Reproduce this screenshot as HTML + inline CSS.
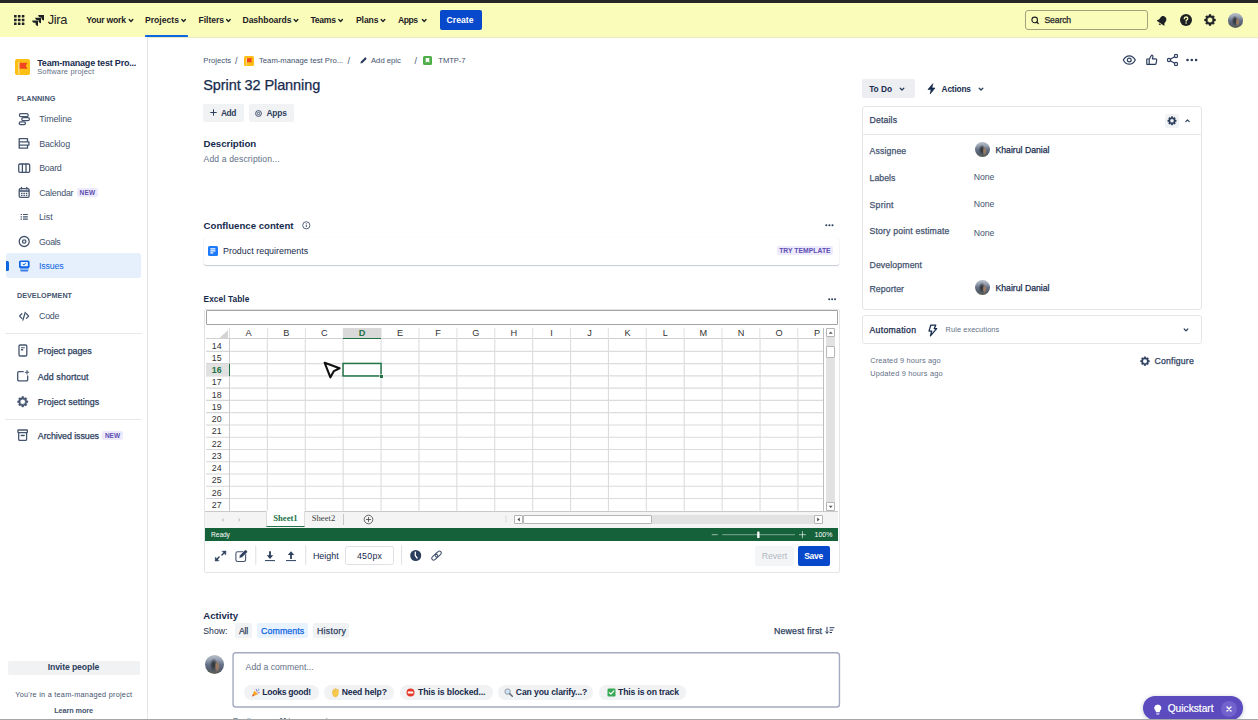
<!DOCTYPE html>
<html lang="en">
<head>
<meta charset="utf-8">
<title>Sprint 32 Planning - Jira</title>
<style>
*{box-sizing:border-box;margin:0;padding:0}
html,body{width:1258px;height:720px;overflow:hidden;background:#fff}
body{font-family:"Liberation Sans",sans-serif;color:#172b4d;font-size:8.5px;position:relative;-webkit-font-smoothing:antialiased}
.a{position:absolute;white-space:nowrap}
.b{font-weight:bold}
svg{position:absolute;overflow:visible}
/* top */
#topbar{left:0;top:0;width:1258px;height:3.200px;background:#262626}
#nav{left:0;top:2px;width:1258px;height:35.500px;background:#fafcb9;border-bottom:.6px solid #e9ebc4}
.nv{top:15px;font-size:8.6px;font-weight:bold;color:#1d2125;line-height:11px}
/* sidebar */
#side{left:0;top:37px;width:148px;height:683px;background:#fff;border-right:1px solid #e3e5ea}
.sl{font-size:8.9px;color:#42526e;line-height:11px;left:39px;margin-top:.5px}
.sh{font-size:7px;font-weight:bold;color:#44546f;left:17px;letter-spacing:.1px}
.lz{font-size:6px;font-weight:bold;color:#5e4db2;background:#eeeafc;border-radius:2px;padding:1px 2px;line-height:7px}
.btn{background:#f1f2f4;border-radius:2px}
.lbl{font-size:8.6px;color:#44546f;font-weight:bold;left:870px}
.val{font-size:8.6px;color:#172b4d;left:974px}

.bc{font-size:7.700px;line-height:10px;color:#44546f;top:55.900px}
.m{-webkit-text-stroke:.25px currentColor}
.t88{font-size:8.800px;line-height:11px}
.chip{top:685.300px;height:14.400px;background:#f1f2f4;border-radius:7.200px}
.cht{top:687.200px;font-size:8.600px;line-height:11px;font-weight:bold;color:#172b4d}
.sm{font-size:7.400px;line-height:10px;color:#626f86}

.ch{top:328.2px;width:37.900px;text-align:center;font-size:9.200px;line-height:10px;color:#333;font-family:"Liberation Sans",sans-serif}
.rh{left:206px;width:23px;text-align:center;font-size:8.800px;line-height:10px;color:#333;padding-right:1.500px}
.sb{background:#fff;border:1px solid #b5b5b5;border-radius:1px}

.lbl2{font-size:8.700px;line-height:11px;color:#44546f;left:869.500px;-webkit-text-stroke:.25px currentColor}
.val2{font-size:8.700px;line-height:11px;color:#172b4d;left:973.700px}
</style>
</head>
<body>
<div class="a" id="nav"></div>
<div class="a" id="topbar"></div>
<div class="a" id="side"></div>

<!-- NAV -->
<svg style="left:13.5px;top:15.3px" width="10.4" height="10" viewBox="0 0 10.4 10"><g fill="#1d2125"><rect x="0" y="0" width="2.6" height="2.5" rx=".5"/><rect x="3.9" y="0" width="2.6" height="2.5" rx=".5"/><rect x="7.8" y="0" width="2.6" height="2.5" rx=".5"/><rect x="0" y="3.75" width="2.6" height="2.5" rx=".5"/><rect x="3.9" y="3.75" width="2.6" height="2.5" rx=".5"/><rect x="7.8" y="3.75" width="2.6" height="2.5" rx=".5"/><rect x="0" y="7.5" width="2.6" height="2.5" rx=".5"/><rect x="3.9" y="7.5" width="2.6" height="2.5" rx=".5"/><rect x="7.8" y="7.5" width="2.6" height="2.5" rx=".5"/></g></svg>
<svg style="left:31.8px;top:15px" width="12" height="11" viewBox="0 0 12 11"><g fill="#1d2125"><path d="M6.2 0H12v5.6c-1.4 0-2.5-1.1-2.5-2.5V2.4H8.7C7.3 2.400 6.200 1.300 6.200 0z"/><path d="M3.2 2.700H9v5.600c-1.400 0-2.500-1.100-2.500-2.500V5.100H5.700C4.300 5.100 3.200 4 3.200 2.700z"/><path d="M.2 5.400H6V11c-1.400 0-2.500-1.100-2.500-2.500V7.800H2.700C1.300 7.800.2 6.700.2 5.400z"/></g></svg>
<div class="a" style="left:47.7px;top:11.96px;font-size:12.8px;line-height:16px;color:#1d2125;letter-spacing:-0.308px">Jira</div>
<div class="a nv" style="left:86.3px;letter-spacing:-0.211px">Your work</div>
<div class="a nv" style="left:145px;letter-spacing:0.011px">Projects</div>
<div class="a nv" style="left:198.5px;letter-spacing:-0.049px">Filters</div>
<div class="a nv" style="left:242.5px;letter-spacing:-0.075px">Dashboards</div>
<div class="a nv" style="left:310.5px;letter-spacing:-0.273px">Teams</div>
<div class="a nv" style="left:356px;letter-spacing:-0.109px">Plans</div>
<div class="a nv" style="left:398px;letter-spacing:-0.495px">Apps</div>
<svg style="left:0;top:0" width="1258" height="40" viewBox="0 0 1258 40"><g fill="none" stroke="#1d2125" stroke-width="1.4" stroke-linecap="round" stroke-linejoin="round"><path d="M129.200 19.600l1.800 1.800 1.800-1.800"/><path d="M181.800 19.600l1.800 1.800 1.800-1.800"/><path d="M226.600 19.600l1.800 1.800 1.800-1.800"/><path d="M294.200 19.600l1.800 1.800 1.800-1.800"/><path d="M338.800 19.600l1.800 1.800 1.800-1.800"/><path d="M381.200 19.600l1.800 1.800 1.800-1.800"/><path d="M422.400 19.600l1.800 1.800 1.800-1.800"/></g></svg>
<div class="a" style="left:145px;top:35px;width:42.500px;height:2px;background:#0c66e4;border-radius:1px 1px 0 0"></div>
<div class="a" style="left:439.500px;top:10px;width:42px;height:19.500px;background:#0848cb;border-radius:2px"></div>
<div class="a nv" style="left:446.5px;color:#fff;letter-spacing:0.047px">Create</div>
<div class="a" style="left:1025.300px;top:10px;width:122.500px;height:19.800px;border:1px solid #a0a27e;border-radius:3px;background:#fafcb9"></div>
<svg style="left:1030.500px;top:15.800px" width="9" height="9" viewBox="0 0 9 9"><circle cx="3.700" cy="3.900" r="2.800" fill="none" stroke="#1d2125" stroke-width="1.100"/><path d="M5.800 6l1.500 1.500" stroke="#1d2125" stroke-width="1.200" stroke-linecap="round"/></svg>
<div class="a m" style="left:1044.5px;top:14.500px;font-size:8.600px;line-height:11px;color:#1d2125;letter-spacing:-0.127px">Search</div>
<svg style="left:1155.500px;top:14.500px" width="12" height="12" viewBox="0 0 12 12"><g transform="rotate(35 6 6)" fill="#1d2125"><path d="M6 .8c-2 0-3.300 1.500-3.300 3.400v2.300L1.500 8.100v.7h9v-.7L9.300 6.500V4.200C9.300 2.300 8 .8 6 .8z"/><path d="M4.800 9.500a1.200 1.200 0 0 0 2.400 0z"/></g></svg>
<svg style="left:1179.500px;top:14px" width="12" height="12" viewBox="0 0 12 12"><circle cx="6" cy="6" r="6" fill="#1d2125"/><path d="M4.300 4.700c0-1 .8-1.700 1.800-1.700s1.700.7 1.700 1.500c0 1.300-1.700 1.400-1.700 2.600" fill="none" stroke="#fafcb9" stroke-width="1.300" stroke-linecap="round"/><circle cx="6.100" cy="9" r=".8" fill="#fafcb9"/></svg>
<svg style="left:1203.800px;top:14.200px" width="12" height="12" viewBox="0 0 12 12"><path fill="#1d2125" fill-rule="evenodd" stroke="#1d2125" stroke-width=".5" stroke-linejoin="round" d="M4.95 1.83L5.10 0.57L6.90 0.57L7.05 1.83L8.20 2.31L9.20 1.53L10.47 2.80L9.69 3.80L10.17 4.95L11.43 5.10L11.43 6.90L10.17 7.05L9.69 8.20L10.47 9.20L9.20 10.47L8.20 9.69L7.05 10.17L6.90 11.43L5.10 11.43L4.95 10.17L3.80 9.69L2.80 10.47L1.53 9.20L2.31 8.20L1.83 7.05L0.57 6.90L0.57 5.10L1.83 4.95L2.31 3.80L1.53 2.80L2.80 1.53L3.80 2.31zM3.30 6.00a2.7 2.7 0 1 0 5.4 0a2.7 2.7 0 1 0 -5.4 0z"/></svg>
<div class="a" style="left:1228.300px;top:13.100px;width:14.600px;height:14.600px;border-radius:50%;background:radial-gradient(ellipse 14% 30% at 64% 60%,#9a7a62 0 45%,transparent 100%),radial-gradient(ellipse 22% 36% at 46% 52%,#353a40 0 30%,transparent 100%),linear-gradient(180deg,#b9c0ca 0%,#98a2b2 25%,#667287 50%,#565f71 75%,#5a5e4c 100%)"></div>


<!-- SIDEBAR -->
<div class="a" style="left:15px;top:59px;width:15px;height:15.500px;background:#fdbf14;border-radius:2px"></div>
<svg style="left:15px;top:59px" width="15" height="15.500" viewBox="0 0 15 15.500"><path d="M4.300 3.800h8.200l-1.800 3 1.800 3H4.300z" fill="#f0451f"/><rect x="3.300" y="3" width="1.100" height="12.500" fill="#f7e3a1"/></svg>
<div class="a b" style="left:37.2px;top:56.500px;font-size:9px;line-height:12px;color:#172b4d;letter-spacing:-0.190px">Team-manage test Pro...</div>
<div class="a" style="left:37.2px;top:67.00px;font-size:7.500px;line-height:10px;color:#626f86;letter-spacing:0.180px">Software project</div>
<div class="a sh" style="top:94px;line-height:10px;font-size:7.300px;letter-spacing:0.070px;left:16.9px">PLANNING</div>
<div class="a sh" style="top:290.500px;line-height:10px;font-size:7.200px;letter-spacing:0.028px;left:17px">DEVELOPMENT</div>

<div class="a" style="left:6.300px;top:253.300px;width:134.700px;height:24.700px;background:#e6effc;border-radius:2.500px"></div>
<div class="a" style="left:6.300px;top:261px;width:2.400px;height:10px;background:#0c66e4;border-radius:0 1.500px 1.500px 0"></div>

<div class="a sl" style="top:113.92px;letter-spacing:-0.060px;left:39.2px">Timeline</div>
<div class="a sl" style="top:138.30px;letter-spacing:-0.113px;left:39.2px">Backlog</div>
<div class="a sl" style="top:162.80px;letter-spacing:-0.272px;left:39.2px">Board</div>
<div class="a sl" style="top:187.00px;letter-spacing:-0.233px;left:39.2px">Calendar</div>
<div class="a" style="left:77px;top:188.300px;width:20.600px;height:8.800px;background:#eceafc;border-radius:2px"></div>
<div class="a b" style="left:79.6px;top:188.900px;font-size:6.500px;line-height:8px;color:#5e4db2;letter-spacing:0.214px">NEW</div>
<div class="a sl" style="top:211.70px;letter-spacing:-0.071px;left:39px">List</div>
<div class="a sl" style="top:236.10px;letter-spacing:-0.347px;left:39px">Goals</div>
<div class="a sl" style="top:260.70px;color:#0c66e4;letter-spacing:-0.191px;left:39px">Issues</div>
<div class="a sl" style="top:310.70px;letter-spacing:-0.240px;left:39px">Code</div>
<div class="a sl m" style="top:345.10px;left:37.8px;color:#2c3e5d;letter-spacing:-0.032px">Project pages</div>
<div class="a sl m" style="top:371.20px;left:37.8px;color:#2c3e5d;letter-spacing:0.079px">Add shortcut</div>
<div class="a sl m" style="top:396.70px;left:37.8px;color:#2c3e5d;letter-spacing:0.054px">Project settings</div>
<div class="a sl m" style="top:430.20px;left:37.8px;color:#2c3e5d;letter-spacing:-0.068px">Archived issues</div>
<div class="a" style="left:102px;top:431.400px;width:21px;height:9px;background:#eceafc;border-radius:2px"></div>
<div class="a b" style="left:104.9px;top:432.100px;font-size:6.500px;line-height:8px;color:#5e4db2;letter-spacing:0.014px">NEW</div>
<div class="a" style="left:5px;top:332.500px;width:137px;height:1.300px;background:#e6e8ec"></div>
<div class="a" style="left:5px;top:418.500px;width:137px;height:1.300px;background:#e6e8ec"></div>

<svg style="left:0;top:0" width="148" height="720" viewBox="0 0 148 720"><g fill="none" stroke="#44546f" stroke-width="1.300" stroke-linejoin="round" stroke-linecap="round">
<!-- timeline -->
<rect x="19.400" y="113.700" width="8.800" height="3" rx="1.500"/><rect x="21.800" y="117.700" width="7.600" height="3" rx="1.500"/><rect x="19.200" y="121.800" width="6.200" height="2.800" rx="1.400"/>
<!-- backlog -->
<path d="M19.200 138.700h8.300v3.200h-8.300zM19.200 141.900h9.700v3.200h-9.700zM19.200 145.100h8.300v3.100h-8.300z"/>
<!-- board -->
<rect x="18.700" y="164" width="11" height="8.300" rx="1.300"/><path d="M22.400 164v8.300M26 164v8.300"/>
<!-- calendar -->
<rect x="19.200" y="188.700" width="9.900" height="8.700" rx="1.300"/><path d="M21.500 187.300v1.600M26.800 187.300v1.600"/>
<!-- goals -->
<circle cx="24.200" cy="241.500" r="5"/><circle cx="24.200" cy="241.500" r="1.700"/>
<!-- code -->
<path d="M21.800 313.800l-2.300 2.300 2.300 2.300M26.400 313.800l2.300 2.300-2.300 2.300M25.300 312.300l-2.400 7.800"/>
<!-- project pages -->
<rect x="19" y="345" width="7.800" height="11" rx="1.200"/>
<!-- add shortcut -->
<path d="M23.200 371.700h-4.300a1.200 1.200 0 0 0-1.200 1.200v6.800a1.200 1.200 0 0 0 1.200 1.200h7.600a1.200 1.200 0 0 0 1.200-1.200v-3.800"/><path d="M27 370.500v3.400M25.300 372.200h3.400" stroke-width="1.100"/>
<!-- archived -->
<rect x="17.900" y="430" width="9.500" height="2.600" rx=".6"/><path d="M18.700 432.600v6.600a1.200 1.200 0 0 0 1.200 1.200h5.500a1.200 1.200 0 0 0 1.200-1.200v-6.600M21.200 435.500h3"/>
</g>
<g fill="#44546f">
<path d="M19.200 190.200h9.900v1.600h-9.900z"/><path d="M21 192.800h1.500v1.300H21zM23.400 192.800h1.500v1.300h-1.500zM25.800 192.800h1.500v1.300h-1.500zM21 194.800h1.500v1.300H21zM23.400 194.800h1.500v1.300h-1.500zM25.800 194.800h1.500v1.300h-1.500z"/>
<!-- list -->
<path d="M20.600 213.900h1.300v1.200h-1.300zM20.600 216.200h1.300v1.200h-1.300zM20.600 218.500h1.300v1.200h-1.300zM23 213.900h4.800v1.200H23zM23 216.200h4.800v1.200H23zM23 218.500h4.800v1.200H23z"/>
<!-- pages -->
<path d="M21 347.200h3.800v1.100H21zM21 349h2.200v1.600H21z"/>
<!-- gear -->
<path fill-rule="evenodd" stroke="#44546f" stroke-width=".5" stroke-linejoin="round" d="M21.75 397.77L21.90 396.62L23.60 396.62L23.75 397.77L24.85 398.23L25.77 397.52L26.98 398.73L26.27 399.65L26.73 400.75L27.88 400.90L27.88 402.60L26.73 402.75L26.27 403.85L26.98 404.77L25.77 405.98L24.85 405.27L23.75 405.73L23.60 406.88L21.90 406.88L21.75 405.73L20.65 405.27L19.73 405.98L18.52 404.77L19.23 403.85L18.77 402.75L17.62 402.60L17.62 400.90L18.77 400.75L19.23 399.65L18.52 398.73L19.73 397.52L20.65 398.23zM20.15 401.75a2.6 2.6 0 1 0 5.2 0a2.6 2.6 0 1 0 -5.2 0z"/>
</g>
<!-- issues icon -->
<g>
<rect x="19" y="260.400" width="10.600" height="7.800" rx="1.600" fill="#0c66e4"/>
<rect x="20.700" y="262" width="7.200" height="4.200" rx=".4" fill="#e6effc"/>
<path d="M22.900 264l1 1 1.800-1.900" fill="none" stroke="#0c66e4" stroke-width="1"/>
<path d="M19.800 268.500h9l-.9 3h-7.200z" fill="#3b7fe8"/>
<path d="M20 269.500h8.600" stroke="#e9f2ff" stroke-width=".5"/>
</g>
</svg>

<div class="a btn" style="left:8px;top:660.500px;width:132px;height:14.500px"></div>
<div class="a b" style="left:47.7px;top:662.200px;font-size:8.700px;line-height:11px;color:#2c3e5d;letter-spacing:-0.126px">Invite people</div>
<div class="a" style="left:15.2px;top:689.500px;font-size:7.300px;line-height:10px;color:#44546f;letter-spacing:0.254px">You're in a team-managed project</div>
<div class="a b" style="left:54.2px;top:705.800px;font-size:7.300px;line-height:10px;color:#44546f;letter-spacing:-0.094px">Learn more</div>


<!-- MAIN: breadcrumbs, title, buttons -->
<div class="a bc" style="left:203.3px;letter-spacing:0.017px">Projects</div>
<div class="a bc" style="left:235.1px;font-size:9px;top:56.100px">/</div>
<div class="a" style="left:244px;top:56.200px;width:10px;height:9.500px;background:#fdbf14;border-radius:1.500px"></div>
<svg style="left:244px;top:56.200px" width="10" height="9.500" viewBox="0 0 10 9.500"><path d="M2.900 2.300h5.400l-1.200 2 1.200 2H2.900z" fill="#f0451f"/><rect x="2.200" y="1.800" width=".8" height="7.700" fill="#f7e3a1"/></svg>
<div class="a bc" style="left:259px;letter-spacing:0.001px">Team-manage test Pro...</div>
<div class="a bc" style="left:347.6px;font-size:9px;top:56.100px">/</div>
<svg style="left:360px;top:56.900px" width="7" height="7" viewBox="0 0 7 7"><path d="M.4 6.600l.5-2.100L4.700.7a.9.900 0 0 1 1.300 0l.3.300a.9.900 0 0 1 0 1.300L2.500 6.100z" fill="#2c3e5d"/></svg>
<div class="a bc" style="left:371px;letter-spacing:-0.003px">Add epic</div>
<div class="a bc" style="left:414.6px;font-size:9px;top:56.100px">/</div>
<div class="a" style="left:423.400px;top:56.200px;width:9px;height:8.600px;background:#4fae47;border-radius:1.500px"></div>
<svg style="left:423.400px;top:56.200px" width="9" height="8.600" viewBox="0 0 9 8.600"><path d="M2.700 1.900h3.600v4.900L4.500 5.400 2.700 6.800z" fill="#fff"/></svg>
<div class="a bc" style="left:438.3px;letter-spacing:-0.113px">TMTP-7</div>

<div class="a m" style="left:203.3px;top:76.18px;font-size:14.500px;line-height:18px;color:#172b4d;letter-spacing:-0.094px">Sprint 32 Planning</div>

<div class="a btn" style="left:203.300px;top:103.600px;width:40.700px;height:18.800px"></div>
<svg style="left:209.500px;top:109.300px" width="7" height="7" viewBox="0 0 7 7"><path d="M3.500.3v6.400M.3 3.500h6.400" stroke="#2c3e5d" stroke-width="1" fill="none"/></svg>
<div class="a b" style="left:220.9px;top:107.600px;font-size:8.400px;line-height:11px;color:#2c3e5d;letter-spacing:-0.391px">Add</div>
<div class="a btn" style="left:249.300px;top:103.600px;width:44.700px;height:18.800px"></div>
<svg style="left:254.800px;top:109.500px" width="7" height="7" viewBox="0 0 7 7"><circle cx="3.500" cy="3.500" r="2.900" fill="none" stroke="#2c3e5d" stroke-width=".9"/><circle cx="3.500" cy="3.500" r="1.200" fill="none" stroke="#2c3e5d" stroke-width=".8"/></svg>
<div class="a b" style="left:266.4px;top:107.600px;font-size:8.400px;line-height:11px;color:#2c3e5d;letter-spacing:-0.179px">Apps</div>

<div class="a b" style="left:203.6px;top:137.300px;font-size:9.700px;line-height:13px;color:#172b4d;letter-spacing:-0.070px">Description</div>
<div class="a t88" style="left:203.6px;top:153.700px;color:#626f86;font-size:8.600px;letter-spacing:0.127px">Add a description...</div>

<!-- Confluence content -->
<div class="a b" style="left:203.6px;top:219.36px;font-size:9.650px;line-height:13px;color:#172b4d;letter-spacing:0.003px">Confluence content</div>
<svg style="left:302px;top:221.200px" width="8.600" height="8.600" viewBox="0 0 8.600 8.600"><circle cx="4.300" cy="4.300" r="3.600" fill="none" stroke="#2c3e5d" stroke-width=".8"/><path d="M4.300 3.900v2.200" stroke="#2c3e5d" stroke-width=".9"/><circle cx="4.300" cy="2.700" r=".55" fill="#2c3e5d"/></svg>
<svg style="left:825px;top:224.300px" width="9" height="3" viewBox="0 0 9 3"><g fill="#2c3e5d"><circle cx="1.300" cy="1.300" r="1.050"/><circle cx="4.400" cy="1.300" r="1.050"/><circle cx="7.500" cy="1.300" r="1.050"/></g></svg>
<div class="a" style="left:203.500px;top:238px;width:635.500px;height:27.300px;background:#fff;border-radius:2px;box-shadow:0 1px 1.200px rgba(9,30,66,.22),0 0 .8px rgba(9,30,66,.16)"></div>
<div class="a" style="left:208.300px;top:246.200px;width:9.700px;height:9.700px;background:#1d7afc;border-radius:1.600px"></div>
<svg style="left:208.300px;top:246.200px" width="9.700" height="9.700" viewBox="0 0 9.700 9.700"><path d="M2.300 2.300h5.100v1.100H2.300zM2.300 4.300h5.100v1.100H2.300zM2.300 6.300h3v1.100h-3z" fill="#fff"/></svg>
<div class="a t88" style="left:223px;top:245.600px;color:#172b4d;font-size:8.850px;letter-spacing:0.034px">Product requirements</div>
<div class="a" style="left:776.500px;top:246.200px;width:56.500px;height:9.300px;background:#eceafc;border-radius:2px"></div>
<div class="a b" style="left:779.2px;top:247.20px;font-size:6.800px;line-height:8px;color:#5e4db2;letter-spacing:0.015px">TRY TEMPLATE</div>

<!-- Excel table -->
<div class="a b" style="left:203.6px;top:294.03px;font-size:8.300px;line-height:11px;color:#172b4d;letter-spacing:0.065px">Excel Table</div>
<svg style="left:828px;top:298px" width="9" height="3" viewBox="0 0 9 3"><g fill="#2c3e5d"><circle cx="1.200" cy="1.300" r="1"/><circle cx="4.100" cy="1.300" r="1"/><circle cx="7" cy="1.300" r="1"/></g></svg>

<!-- Excel frame -->
<div class="a" style="left:203.500px;top:308.500px;width:636px;height:264px;border:1px solid #e3e5e9;border-radius:2px;background:#fff"></div>
<div class="a" style="left:205.500px;top:310.300px;width:632.500px;height:14.600px;border:1.300px solid #a3a3a3;border-radius:1px;background:#fff"></div>
<div class="a" style="left:229.5px;top:339.0px;width:594.0px;height:171.7px;background:#fff"></div>
<svg style="left:229.5px;top:339.0px" width="594.0" height="171.7" viewBox="0 0 594.0 171.7"><path d="M37.35 0V171.7M75.25 0V171.7M113.15 0V171.7M151.05 0V171.7M188.95 0V171.7M226.85 0V171.7M264.75 0V171.7M302.65 0V171.7M340.55 0V171.7M378.45 0V171.7M416.35 0V171.7M454.25 0V171.7M492.15 0V171.7M530.05 0V171.7M567.95 0V171.7M0 12.36H594.0M0 24.63H594.0M0 36.89H594.0M0 49.16H594.0M0 61.42H594.0M0 73.68H594.0M0 85.95H594.0M0 98.21H594.0M0 110.48H594.0M0 122.74H594.0M0 135.00H594.0M0 147.27H594.0M0 159.53H594.0" fill="none" stroke="#dcdcdc" stroke-width="1.100"/></svg>
<div class="a" style="left:205.500px;top:327.800px;width:24px;height:11.200px;background:#fff;border-bottom:1.200px solid #d0d0d0;border-right:1px solid #dedede"></div>
<div class="a" style="left:229.5px;top:327.800px;width:594.0px;height:11.200px;background:#fff;border-bottom:1.200px solid #d0d0d0"></div>
<svg style="left:229.5px;top:327.800px" width="594.0" height="11.200" viewBox="0 0 594.0 11.200"><path d="M37.35 0V11.2M75.25 0V11.2M113.15 0V11.2M151.05 0V11.2M188.95 0V11.2M226.85 0V11.2M264.75 0V11.2M302.65 0V11.2M340.55 0V11.2M378.45 0V11.2M416.35 0V11.2M454.25 0V11.2M492.15 0V11.2M530.05 0V11.2M567.95 0V11.2" fill="none" stroke="#e2e2e2" stroke-width="1.100"/></svg>
<div class="a" style="left:205.500px;top:339.0px;width:24px;height:171.7px;background:#fff;border-right:1.200px solid #cbcbcb"></div>
<svg style="left:205.500px;top:339.0px" width="24" height="171.7" viewBox="0 0 24 171.7"><path d="M0 12.36H23M0 24.63H23M0 36.89H23M0 49.16H23M0 61.42H23M0 73.68H23M0 85.95H23M0 98.21H23M0 110.48H23M0 122.74H23M0 135.00H23M0 147.27H23M0 159.53H23" fill="none" stroke="#d6d6d6" stroke-width="1.100"/></svg>
<svg style="left:219px;top:329.500px" width="9" height="8.500" viewBox="0 0 9 8.500"><path d="M9 0v8.500H0z" fill="#d4d4d4"/></svg>
<div class="a" style="left:342.9px;top:327.800px;width:37.9px;height:11.500px;background:#d9d9d9;border-bottom:1.400px solid #217346"></div>
<div class="a" style="left:205.500px;top:363.6px;width:24px;height:12.3px;background:#e1e1e1;border-right:1.400px solid #217346"></div>
<div class="a ch" style="left:229.5px">A</div>
<div class="a ch" style="left:267.4px">B</div>
<div class="a ch" style="left:305.3px">C</div>
<div class="a ch" style="left:343.2px;font-weight:bold;color:#217346">D</div>
<div class="a ch" style="left:381.1px">E</div>
<div class="a ch" style="left:419.0px">F</div>
<div class="a ch" style="left:456.9px">G</div>
<div class="a ch" style="left:494.8px">H</div>
<div class="a ch" style="left:532.7px">I</div>
<div class="a ch" style="left:570.6px">J</div>
<div class="a ch" style="left:608.5px">K</div>
<div class="a ch" style="left:646.4px">L</div>
<div class="a ch" style="left:684.3px">M</div>
<div class="a ch" style="left:722.2px">N</div>
<div class="a ch" style="left:760.1px">O</div>
<div class="a ch" style="left:798.0px">P</div>
<div class="a rh" style="top:340.5px">14</div>
<div class="a rh" style="top:352.8px">15</div>
<div class="a rh" style="top:365.0px;font-weight:bold;color:#217346">16</div>
<div class="a rh" style="top:377.3px">17</div>
<div class="a rh" style="top:389.6px">18</div>
<div class="a rh" style="top:401.8px">19</div>
<div class="a rh" style="top:414.1px">20</div>
<div class="a rh" style="top:426.3px">21</div>
<div class="a rh" style="top:438.6px">22</div>
<div class="a rh" style="top:450.9px">23</div>
<div class="a rh" style="top:463.1px">24</div>
<div class="a rh" style="top:475.4px">25</div>
<div class="a rh" style="top:487.7px">26</div>
<div class="a rh" style="top:499.9px">27</div>
<svg style="left:341px;top:361px" width="43" height="18" viewBox="0 0 43 18"><rect x="2.050" y="2.450" width="38" height="12.500" fill="#fff" stroke="#217346" stroke-width="1.500"/></svg>
<div class="a" style="left:380px;top:374.900px;width:3.200px;height:3.200px;background:#217346;box-shadow:0 0 0 .5px #fff"></div>
<svg style="left:320px;top:358px" width="24" height="24" viewBox="0 0 24 24"><path d="M4.700 4.800L19.600 10.300 13.900 13.100 10.400 19.300z" fill="#fff" stroke="#111" stroke-width="2.100" stroke-linejoin="round"/></svg>
<div class="a" style="left:823.200px;top:327.800px;width:1.300px;height:183px;background:#bdbdbd"></div>
<div class="a" style="left:825.800px;top:327.500px;width:9.400px;height:183.500px;background:#e2e2e2"></div>
<div class="a sb" style="left:825.800px;top:327.500px;width:9.400px;height:9px"></div>
<div class="a sb" style="left:825.800px;top:346.300px;width:9.400px;height:11.800px"></div>
<div class="a sb" style="left:825.800px;top:502.300px;width:9.400px;height:8.700px"></div>
<svg style="left:825.800px;top:327.500px" width="9.400" height="184" viewBox="0 0 9.400 184"><path d="M2.700 5.700L4.700 3.300l2 2.400z" fill="#555"/><path d="M2.700 177.800l2 2.400 2-2.400z" fill="#555"/></svg>
<div class="a" style="left:205.200px;top:510.700px;width:633px;height:17.600px;background:#f3f4f3;border-top:1.200px solid #c9c9c9"></div>
<svg style="left:218px;top:514px" width="30" height="12" viewBox="0 0 30 12"><path d="M5.600 3.800L3.700 5.900l1.900 2.100zM20.700 3.800l1.900 2.100-1.900 2.100z" fill="#c6c6c6"/></svg>
<div class="a" style="left:266px;top:511px;width:39px;height:15.800px;background:#fff;border-bottom:1.400px solid #217346;border-left:1px solid #dcdcdc;border-right:1px solid #dcdcdc"></div>
<div class="a b" style="left:266px;top:513px;width:39px;text-align:center;font-family:'Liberation Serif',serif;font-size:8.600px;line-height:11px;color:#217346">Sheet1</div>
<div class="a" style="left:305px;top:513px;width:37px;text-align:center;font-family:'Liberation Serif',serif;font-size:8.600px;line-height:11px;color:#444">Sheet2</div>
<div class="a" style="left:342.600px;top:514px;width:1px;height:11.400px;background:#c6c6c6"></div>
<svg style="left:363px;top:514.200px" width="11" height="11" viewBox="0 0 11 11"><circle cx="5.500" cy="5.500" r="4.300" fill="none" stroke="#444" stroke-width=".8"/><path d="M5.500 3v5M3 5.500h5" stroke="#444" stroke-width=".8"/></svg>
<svg style="left:504px;top:515px" width="4" height="10" viewBox="0 0 4 10"><g fill="#c2c2c2"><rect x="1.500" y="1" width="1" height="1.200"/><rect x="1.500" y="3.300" width="1" height="1.200"/><rect x="1.500" y="5.600" width="1" height="1.200"/></g></svg>
<div class="a" style="left:514.400px;top:515.400px;width:309px;height:8.900px;background:#e2e2e2"></div>
<div class="a sb" style="left:514.400px;top:515.400px;width:9px;height:8.900px"></div>
<div class="a sb" style="left:523px;top:515.400px;width:129.300px;height:8.900px"></div>
<div class="a sb" style="left:814.400px;top:515.400px;width:9px;height:8.900px"></div>
<svg style="left:514.400px;top:515.400px" width="309" height="8.900" viewBox="0 0 309 8.900"><path d="M5.600 2.500L3.300 4.450l2.300 1.950zM303.400 2.500l2.300 1.950-2.300 1.950z" fill="#444"/></svg>
<div class="a" style="left:205.200px;top:528.200px;width:633px;height:12.400px;background:#15613a"></div>
<div class="a" style="left:211.1px;top:529.600px;font-size:6.600px;line-height:10px;color:#fff;letter-spacing:-0.066px">Ready</div>
<svg style="left:708px;top:528.200px" width="130" height="12.400" viewBox="0 0 130 12.400"><g stroke="#fff" fill="none"><path d="M3.700 6.700h6" stroke-width=".7" opacity=".8"/><path d="M14.200 6.700h72.800" stroke-width=".6" opacity=".75"/><path d="M91 6.700h7M94.500 3.200v7" stroke-width=".7" opacity=".9"/></g><rect x="49.200" y="3.600" width="2.300" height="6.400" fill="#fff"/></svg>
<div class="a" style="left:814.4px;top:529.600px;font-size:6.900px;line-height:10px;color:#fff;letter-spacing:0.158px">100%</div>

<!-- Excel toolbar -->
<svg style="left:205px;top:541px" width="240" height="31" viewBox="0 0 240 31"><g fill="none" stroke="#2c3e5d" stroke-width="1.200" stroke-linecap="round" stroke-linejoin="round">
<path d="M19.300 11.700l-2.400 2.400M11.700 18.400l2.400-2.400" stroke-width="1.400"/><path d="M17.400 10.300l3.500-.2-.2 3.500zM10.400 16.500l-.2 3.500 3.500-.2z" fill="#2c3e5d" stroke-width=".6"/>
<rect x="30.900" y="10.700" width="9.700" height="9.800" rx="1.700" stroke="#44546f" stroke-width="1.100"/>
<path d="M60.400 19.600h9.200M81.400 19.600h9.200" stroke-width="1"/>
</g>
<g fill="#2c3e5d">
<path d="M34 17.300l.8-3 5.100-5.100a1 1 0 0 1 1.400 0l.8.800a1 1 0 0 1 0 1.400l-5.100 5.100z" stroke="#fff" stroke-width=".5"/>
<path d="M64.100 10.300h1.800v4h2.300L65 17.900l-3.200-3.600h2.300z"/>
<path d="M85.100 17.900h1.800v-4h2.300L86 10.300l-3.200 3.600h2.300z"/>
<circle cx="210.700" cy="14.500" r="5.500"/>
<g transform="rotate(-42 231.500 14.600)" fill="none" stroke="#44546f" stroke-width="1.100"><rect x="225.700" y="12.700" width="7" height="3.800" rx="1.900"/><rect x="230.300" y="12.700" width="7" height="3.800" rx="1.900"/></g>
</g>
<path d="M210.300 11.200v3.500l1.800 2.300" fill="none" stroke="#fff" stroke-width="1.300" stroke-linecap="round" stroke-linejoin="round"/>
<g stroke="#dcdfe4" stroke-width="1"><path d="M50.800 4.600v19.100M100.700 4.600v19.100M196.600 4.600v19.100"/></g>
</svg>
<div class="a" style="left:312.9px;top:550.50px;font-size:8.950px;line-height:11px;color:#172b4d;letter-spacing:0.011px">Height</div>
<div class="a" style="left:345.400px;top:546.400px;width:48.700px;height:18.400px;border:1px solid #dfe1e6;border-radius:2.500px;background:#fff"></div>
<div class="a" style="left:356.9px;top:550.50px;font-size:8.800px;line-height:11px;color:#172b4d;letter-spacing:0.283px">450px</div>
<div class="a" style="left:755px;top:545.700px;width:39px;height:20px;background:#f4f5f7;border-radius:2px"></div>
<div class="a" style="left:761.7px;top:550.50px;font-size:8.700px;line-height:11px;color:#b3b9c4;letter-spacing:-0.019px">Revert</div>
<div class="a" style="left:797.700px;top:545.500px;width:32.700px;height:20.400px;background:#0848cb;border-radius:2px"></div>
<div class="a b" style="left:804.2px;top:550.50px;font-size:8.500px;line-height:11px;color:#fff;letter-spacing:-0.253px">Save</div>

<!-- Activity -->
<div class="a b" style="left:203.3px;top:608.50px;font-size:9.650px;line-height:13px;color:#172b4d;letter-spacing:-0.012px">Activity</div>
<div class="a t88" style="left:203.3px;top:625.50px;color:#172b4d;font-size:8.700px;letter-spacing:0.011px">Show:</div>
<div class="a btn" style="left:235.300px;top:623.300px;width:16.500px;height:14.300px"></div>
<div class="a t88 m" style="left:238.9px;top:625.50px;color:#2c3e5d;font-size:8.700px;letter-spacing:-0.128px">All</div>
<div class="a" style="left:257.200px;top:623.300px;width:51px;height:14.300px;background:#e9f2ff;border-radius:2px"></div>
<div class="a t88 m" style="left:261.1px;top:625.50px;color:#0c66e4;letter-spacing:0.081px">Comments</div>
<div class="a btn" style="left:313.300px;top:623.300px;width:36.200px;height:14.300px"></div>
<div class="a t88 m" style="left:317px;top:625.50px;color:#2c3e5d;font-size:8.700px;letter-spacing:0.295px">History</div>
<div class="a t88 m" style="left:773.9px;top:625.50px;color:#2c3e5d;font-size:8.800px;letter-spacing:0.195px">Newest first</div>
<svg style="left:825px;top:626px" width="10" height="9" viewBox="0 0 10 9"><g fill="none" stroke="#2c3e5d" stroke-width="1" stroke-linecap="round" stroke-linejoin="round"><path d="M2 1.200v6M.6 5.800L2 7.300l1.400-1.500M5 1.700h4M5 4.100h2.800M5 6.500h1.600"/></g></svg>

<div class="a" style="left:204.700px;top:655px;width:19.400px;height:19.400px;border-radius:50%;background:radial-gradient(ellipse 14% 30% at 64% 60%,#9a7a62 0 45%,transparent 100%),radial-gradient(ellipse 22% 36% at 46% 52%,#353a40 0 30%,transparent 100%),linear-gradient(180deg,#b9c0ca 0%,#98a2b2 25%,#667287 50%,#565f71 75%,#5a5e4c 100%)"></div>
<svg style="left:231px;top:650px" width="611" height="60" viewBox="0 0 611 60"><rect x="2.050" y="2.750" width="606.400" height="54.300" rx="2.800" fill="#fff" stroke="#a4aabf" stroke-width="1.400"/></svg>
<div class="a t88" style="left:245.6px;top:661.70px;color:#626f86;font-size:8.700px;letter-spacing:-0.006px">Add a comment...</div>
<div class="a chip" style="left:243.8px;width:75.0px"></div>
<svg style="left:250.6px;top:688px" width="9" height="9" viewBox="0 0 9 9"><path d="M1 8.500L3.300 2.500 7 6.200z" fill="#f5a623"/><path d="M1 8.500l1-2.600 1.600 1.600z" fill="#e2574c"/><path d="M5.200 1.200l.5 1.500M7.300 2.300l-1 1.100M8.300 4.600l-1.500.3" stroke="#7b61c4" stroke-width=".8" stroke-linecap="round"/><circle cx="7.800" cy="1.200" r=".6" fill="#3fa7e0"/></svg>
<div class="a cht" style="left:262.2px;letter-spacing:-0.266px">Looks good!</div>
<div class="a chip" style="left:323.8px;width:70.4px"></div>
<svg style="left:330.1px;top:688px" width="9" height="9" viewBox="0 0 9 9"><path d="M2.300 4.200c-.5-.9.500-1.600 1.100-.8l.6.900L3.200 2c-.3-.9.900-1.300 1.300-.5l.8 1.800-.2-2.300c0-.9 1.200-1 1.400-.1l.4 2.500.4-1.700c.2-.8 1.300-.6 1.200.3L8.200 6c-.2 1.700-1.300 2.900-2.900 2.900-1.300 0-2-.8-2.500-2z" fill="#f7c948" stroke="#e0a320" stroke-width=".3"/></svg>
<div class="a cht" style="left:341.7px;letter-spacing:-0.114px">Need help?</div>
<div class="a chip" style="left:399.5px;width:93.0px"></div>
<svg style="left:406.4px;top:688px" width="9" height="9" viewBox="0 0 9 9"><circle cx="4.500" cy="4.500" r="4" fill="#e5392b"/><rect x="1.700" y="3.500" width="5.600" height="2" rx=".4" fill="#fff"/></svg>
<div class="a cht" style="left:418px;letter-spacing:-0.109px">This is blocked...</div>
<div class="a chip" style="left:497.8px;width:95.7px"></div>
<svg style="left:504.2px;top:688px" width="9" height="9" viewBox="0 0 9 9"><circle cx="3.600" cy="3.600" r="2.700" fill="#cfe3f5" stroke="#8a8f99" stroke-width=".9"/><path d="M5.700 5.700l2.600 2.600" stroke="#5a5f6b" stroke-width="1.400" stroke-linecap="round"/></svg>
<div class="a cht" style="left:515.8px;letter-spacing:-0.111px">Can you clarify...?</div>
<div class="a chip" style="left:599.2px;width:86.8px"></div>
<svg style="left:606.5px;top:688px" width="9" height="9" viewBox="0 0 9 9"><rect x=".5" y=".5" width="8" height="8" rx="1.300" fill="#37a853"/><path d="M2.300 4.600l1.600 1.600 2.900-3.300" fill="none" stroke="#fff" stroke-width="1.200" stroke-linecap="round" stroke-linejoin="round"/></svg>
<div class="a cht" style="left:618.1px;letter-spacing:-0.143px">This is on track</div>
<div class="a" style="left:233px;top:715.500px;font-size:7.600px;line-height:9px;color:#44546f">Pro tip: press <b>M</b> to comment</div>


<!-- RIGHT PANEL -->
<svg style="left:1120px;top:51.400px" width="82" height="18" viewBox="0 0 82 18"><g fill="none" stroke="#2c3e5d" stroke-width="1.200" stroke-linecap="round" stroke-linejoin="round">
<path d="M3.300 9c1.500-2.800 3.600-4.200 6-4.200s4.500 1.400 6 4.200c-1.500 2.800-3.600 4.200-6 4.200s-4.500-1.400-6-4.200z"/><circle cx="9.300" cy="9" r="1.900"/>
<path d="M26.800 8h2.400v5.300h-2.400zM29.200 8.300l2-3.600c.2-.5.700-.7 1.100-.5.600.3.800 1 .6 1.700l-.5 1.900h3.100c.8 0 1.300.7 1.200 1.400l-.6 3.100c-.1.600-.6 1-1.200 1h-5.700"/>
<circle cx="49" cy="9" r="1.600"/><circle cx="56" cy="5" r="1.600"/><circle cx="56" cy="13" r="1.600"/><path d="M50.400 8.200l4.200-2.400M50.400 9.800l4.200 2.400"/>
</g><g fill="#2c3e5d"><circle cx="67.500" cy="9" r="1.300"/><circle cx="71.800" cy="9" r="1.300"/><circle cx="76.100" cy="9" r="1.300"/></g></svg>

<div class="a" style="left:862.200px;top:79px;width:52.500px;height:19px;background:#eceef1;border-radius:2px"></div>
<div class="a b" style="left:869.2px;top:83.70px;font-size:8.300px;line-height:11px;color:#172b4d;letter-spacing:-0.023px">To Do</div>
<div class="a b" style="left:941.6px;top:83.70px;font-size:8.300px;line-height:11px;color:#172b4d;letter-spacing:-0.173px">Actions</div>
<svg style="left:860px;top:78px" width="130" height="22" viewBox="0 0 130 22"><g fill="none" stroke="#2c3e5d" stroke-width="1.300" stroke-linecap="round" stroke-linejoin="round"><path d="M40.200 10.200l1.800 1.800 1.800-1.800M119.200 10.200l1.800 1.800 1.800-1.800"/></g><path d="M72.800 5.700l-4.800 5.700h3.200l-1 4.500 4.800-5.900h-3.100z" fill="#172b4d" stroke="#172b4d" stroke-width=".7" stroke-linejoin="round"/></svg>

<div class="a" style="left:862px;top:106px;width:339.500px;height:204px;border:1px solid #e4e6ea;border-radius:3px;background:#fff"></div>
<div class="a" style="left:862px;top:134.300px;width:339.500px;height:1px;background:#e4e6ea"></div>
<div class="a m" style="left:869.6px;top:115.40px;font-size:8.700px;line-height:11px;color:#344563;letter-spacing:0.140px">Details</div>
<div class="a btn" style="left:1164.500px;top:114px;width:14px;height:13.500px"></div>
<svg style="left:1164.500px;top:114px" width="30" height="13.500" viewBox="0 0 30 13.500"><path fill="#2c3e5d" fill-rule="evenodd" stroke="#2c3e5d" stroke-width=".4" stroke-linejoin="round" d="M6.17 3.50L6.29 2.56L7.71 2.56L7.83 3.50L8.74 3.88L9.50 3.30L10.50 4.30L9.92 5.06L10.30 5.97L11.24 6.09L11.24 7.51L10.30 7.63L9.92 8.54L10.50 9.30L9.50 10.30L8.74 9.72L7.83 10.10L7.71 11.04L6.29 11.04L6.17 10.10L5.26 9.72L4.50 10.30L3.50 9.30L4.08 8.54L3.70 7.63L2.76 7.51L2.76 6.09L3.70 5.97L4.08 5.06L3.50 4.30L4.50 3.30L5.26 3.88zM5.00 6.80a2 2 0 1 0 4 0a2 2 0 1 0 -4 0z"/><path d="M20.800 7.600l1.700-1.700 1.700 1.700" fill="none" stroke="#2c3e5d" stroke-width="1.200" stroke-linecap="round" stroke-linejoin="round"/></svg>

<div class="a lbl2" style="top:145.60px;letter-spacing:0.136px;left:869.5px">Assignee</div>
<div class="a" style="left:974.500px;top:142px;width:15px;height:15px;border-radius:50%;background:radial-gradient(ellipse 14% 30% at 64% 60%,#9a7a62 0 45%,transparent 100%),radial-gradient(ellipse 22% 36% at 46% 52%,#353a40 0 30%,transparent 100%),linear-gradient(180deg,#b9c0ca 0%,#98a2b2 25%,#667287 50%,#565f71 75%,#5a5e4c 100%)"></div>
<div class="a val2 m" style="left:995.5px;top:144.70px;letter-spacing:-0.007px">Khairul Danial</div>
<div class="a lbl2" style="top:172.50px;letter-spacing:0.058px;left:869.5px">Labels</div>
<div class="a val2" style="top:171.50px;color:#44546f;letter-spacing:-0.027px;left:973.7px">None</div>
<div class="a lbl2" style="top:199.50px;letter-spacing:0.259px;left:869.5px">Sprint</div>
<div class="a val2" style="top:198.50px;color:#44546f;letter-spacing:-0.027px;left:973.7px">None</div>
<div class="a lbl2" style="top:226.40px;letter-spacing:0.164px;left:869.5px">Story point estimate</div>
<div class="a val2" style="top:228.10px;color:#44546f;letter-spacing:-0.027px;left:973.7px">None</div>
<div class="a lbl2" style="top:259.70px;letter-spacing:0.130px;left:869.5px">Development</div>
<div class="a lbl2" style="top:283.70px;letter-spacing:0.098px;left:869.5px">Reporter</div>
<div class="a" style="left:974.500px;top:280.100px;width:15px;height:15px;border-radius:50%;background:radial-gradient(ellipse 14% 30% at 64% 60%,#9a7a62 0 45%,transparent 100%),radial-gradient(ellipse 22% 36% at 46% 52%,#353a40 0 30%,transparent 100%),linear-gradient(180deg,#b9c0ca 0%,#98a2b2 25%,#667287 50%,#565f71 75%,#5a5e4c 100%)"></div>
<div class="a val2 m" style="left:995.5px;top:282.70px;letter-spacing:-0.007px">Khairul Danial</div>

<div class="a" style="left:862px;top:315px;width:339.500px;height:29.400px;border:1px solid #e4e6ea;border-radius:3px;background:#fff"></div>
<div class="a m" style="left:869.5px;top:324.80px;font-size:8.700px;line-height:11px;color:#172b4d;letter-spacing:0.283px">Automation</div>
<svg style="left:927px;top:323.500px" width="11" height="13" viewBox="0 0 11 13"><path d="M3.800 1h5L7.200 4.700h2.500L3.400 11.800l1.300-4.700H2z" fill="none" stroke="#172b4d" stroke-width="1.250" stroke-linejoin="round"/></svg>
<div class="a sm" style="left:945.6px;top:325.40px;letter-spacing:0.072px">Rule executions</div>
<svg style="left:1182px;top:326px" width="8" height="8" viewBox="0 0 8 8"><path d="M2.200 3l1.800 1.800L5.800 3" fill="none" stroke="#2c3e5d" stroke-width="1.200" stroke-linecap="round" stroke-linejoin="round"/></svg>
<div class="a sm" style="left:870.2px;top:355.60px;letter-spacing:0.173px">Created 9 hours ago</div>
<div class="a sm" style="left:870.2px;top:369.40px;letter-spacing:0.187px">Updated 9 hours ago</div>
<svg style="left:1139.700px;top:356.300px" width="10" height="10" viewBox="0 0 10 10"><path fill="#2c3e5d" fill-rule="evenodd" stroke="#2c3e5d" stroke-width=".4" stroke-linejoin="round" d="M4.14 1.81L4.26 0.76L5.74 0.76L5.86 1.81L6.79 2.19L7.62 1.54L8.66 2.58L8.01 3.41L8.39 4.34L9.44 4.46L9.44 5.94L8.39 6.06L8.01 6.99L8.66 7.82L7.62 8.86L6.79 8.21L5.86 8.59L5.74 9.64L4.26 9.64L4.14 8.59L3.21 8.21L2.38 8.86L1.34 7.82L1.99 6.99L1.61 6.06L0.56 5.94L0.56 4.46L1.61 4.34L1.99 3.41L1.34 2.58L2.38 1.54L3.21 2.19zM2.80 5.20a2.2 2.2 0 1 0 4.4 0a2.2 2.2 0 1 0 -4.4 0z"/></svg>
<div class="a m" style="left:1154.5px;top:355.80px;font-size:8.700px;line-height:11px;color:#2c3e5d;letter-spacing:0.204px">Configure</div>

<!-- Quickstart -->
<div class="a" style="left:1142.600px;top:696.400px;width:100.400px;height:24px;border-radius:12px;background:#5b4bbe;box-shadow:0 1px 4px rgba(9,30,66,.25)"></div>
<svg style="left:1152.500px;top:703.800px" width="10" height="11" viewBox="0 0 10 11"><path d="M4.800.5a3.600 3.600 0 0 0-2 6.600v1h4v-1a3.600 3.600 0 0 0-2-6.600zM3 8.700h3.600v.8H3zM3.500 10h2.600v.6H3.500z" fill="#fff"/></svg>
<div class="a" style="left:1167.7px;top:702.00px;font-size:10.200px;line-height:13px;color:#fff;-webkit-text-stroke:.2px #fff;letter-spacing:0.005px">Quickstart</div>
<div class="a" style="left:1220.800px;top:700.800px;width:16px;height:16px;border-radius:50%;background:#7262cd"></div>
<svg style="left:1225.800px;top:705.800px" width="6" height="6" viewBox="0 0 6 6"><path d="M1 1l4 4M5 1L1 5" stroke="#fff" stroke-width="1.400" stroke-linecap="round"/></svg>
<div class="a" style="left:0;top:719px;width:1258px;height:1px;background:#a6a6a6"></div>

</body>
</html>
